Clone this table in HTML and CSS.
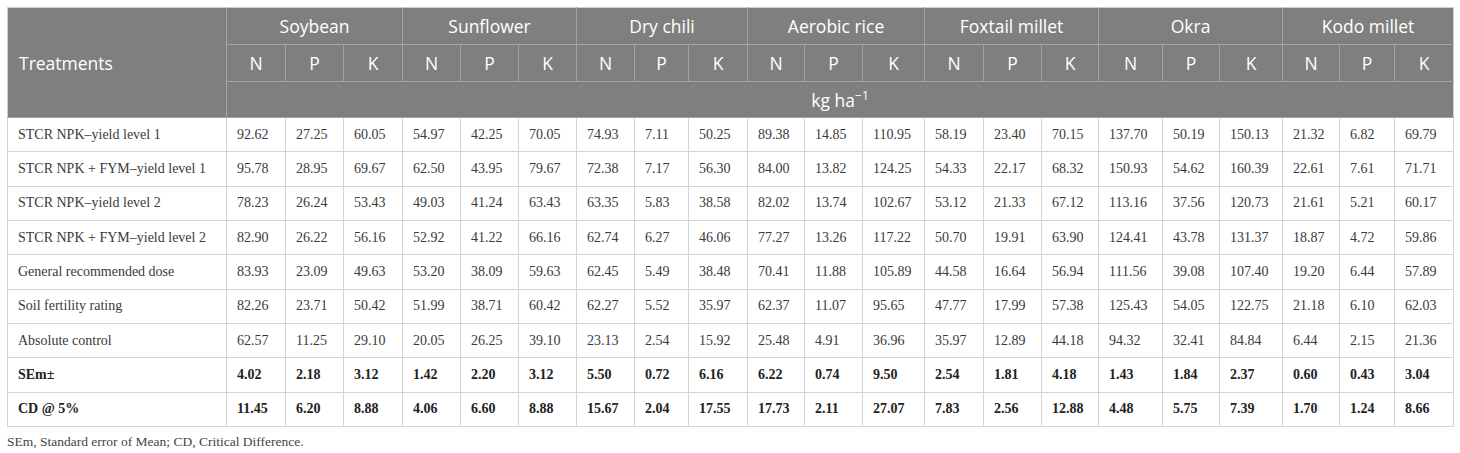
FILE: index.html
```html
<!DOCTYPE html>
<html lang="en">
<head>
    <meta charset="UTF-8">
    <meta name="viewport" content="width=device-width, initial-scale=1.0">
    <title>Nutrient uptake | Table</title>
    <link rel="stylesheet" href="styles.css">
</head>
<body>
    <section class="table-wrap">
        <table class="data-table">
            <colgroup>
                <col style="width: 219px">
                <col style="width: 59px"><col style="width: 58px"><col style="width: 59px">
                <col style="width: 58px"><col style="width: 58px"><col style="width: 58px">
                <col style="width: 58px"><col style="width: 54px"><col style="width: 59px">
                <col style="width: 57px"><col style="width: 58px"><col style="width: 62px">
                <col style="width: 59px"><col style="width: 58px"><col style="width: 57px">
                <col style="width: 64px"><col style="width: 57px"><col style="width: 63px">
                <col style="width: 57px"><col style="width: 55px"><col style="width: 59px">
            </colgroup>
            <thead>
                <tr class="row-crops">
                    <th rowspan="3" class="treat-head">Treatments</th>
                    <th colspan="3">Soybean</th>
                    <th colspan="3">Sunflower</th>
                    <th colspan="3">Dry chili</th>
                    <th colspan="3">Aerobic rice</th>
                    <th colspan="3">Foxtail millet</th>
                    <th colspan="3">Okra</th>
                    <th colspan="3">Kodo millet</th>
                </tr>
                <tr class="row-npk">
                    <th>N</th><th>P</th><th>K</th>
                    <th>N</th><th>P</th><th>K</th>
                    <th>N</th><th>P</th><th>K</th>
                    <th>N</th><th>P</th><th>K</th>
                    <th>N</th><th>P</th><th>K</th>
                    <th>N</th><th>P</th><th>K</th>
                    <th>N</th><th>P</th><th>K</th>
                </tr>
                <tr class="row-unit">
                    <th colspan="21">kg ha<sup>&minus;1</sup></th>
                </tr>
            </thead>
            <tbody>
                <tr>
                    <td>STCR NPK–yield level 1</td>
                    <td>92.62</td><td>27.25</td><td>60.05</td>
                    <td>54.97</td><td>42.25</td><td>70.05</td>
                    <td>74.93</td><td>7.11</td><td>50.25</td>
                    <td>89.38</td><td>14.85</td><td>110.95</td>
                    <td>58.19</td><td>23.40</td><td>70.15</td>
                    <td>137.70</td><td>50.19</td><td>150.13</td>
                    <td>21.32</td><td>6.82</td><td>69.79</td>
                </tr>
                <tr>
                    <td>STCR NPK + FYM–yield level 1</td>
                    <td>95.78</td><td>28.95</td><td>69.67</td>
                    <td>62.50</td><td>43.95</td><td>79.67</td>
                    <td>72.38</td><td>7.17</td><td>56.30</td>
                    <td>84.00</td><td>13.82</td><td>124.25</td>
                    <td>54.33</td><td>22.17</td><td>68.32</td>
                    <td>150.93</td><td>54.62</td><td>160.39</td>
                    <td>22.61</td><td>7.61</td><td>71.71</td>
                </tr>
                <tr>
                    <td>STCR NPK–yield level 2</td>
                    <td>78.23</td><td>26.24</td><td>53.43</td>
                    <td>49.03</td><td>41.24</td><td>63.43</td>
                    <td>63.35</td><td>5.83</td><td>38.58</td>
                    <td>82.02</td><td>13.74</td><td>102.67</td>
                    <td>53.12</td><td>21.33</td><td>67.12</td>
                    <td>113.16</td><td>37.56</td><td>120.73</td>
                    <td>21.61</td><td>5.21</td><td>60.17</td>
                </tr>
                <tr>
                    <td>STCR NPK + FYM–yield level 2</td>
                    <td>82.90</td><td>26.22</td><td>56.16</td>
                    <td>52.92</td><td>41.22</td><td>66.16</td>
                    <td>62.74</td><td>6.27</td><td>46.06</td>
                    <td>77.27</td><td>13.26</td><td>117.22</td>
                    <td>50.70</td><td>19.91</td><td>63.90</td>
                    <td>124.41</td><td>43.78</td><td>131.37</td>
                    <td>18.87</td><td>4.72</td><td>59.86</td>
                </tr>
                <tr>
                    <td>General recommended dose</td>
                    <td>83.93</td><td>23.09</td><td>49.63</td>
                    <td>53.20</td><td>38.09</td><td>59.63</td>
                    <td>62.45</td><td>5.49</td><td>38.48</td>
                    <td>70.41</td><td>11.88</td><td>105.89</td>
                    <td>44.58</td><td>16.64</td><td>56.94</td>
                    <td>111.56</td><td>39.08</td><td>107.40</td>
                    <td>19.20</td><td>6.44</td><td>57.89</td>
                </tr>
                <tr>
                    <td>Soil fertility rating</td>
                    <td>82.26</td><td>23.71</td><td>50.42</td>
                    <td>51.99</td><td>38.71</td><td>60.42</td>
                    <td>62.27</td><td>5.52</td><td>35.97</td>
                    <td>62.37</td><td>11.07</td><td>95.65</td>
                    <td>47.77</td><td>17.99</td><td>57.38</td>
                    <td>125.43</td><td>54.05</td><td>122.75</td>
                    <td>21.18</td><td>6.10</td><td>62.03</td>
                </tr>
                <tr>
                    <td>Absolute control</td>
                    <td>62.57</td><td>11.25</td><td>29.10</td>
                    <td>20.05</td><td>26.25</td><td>39.10</td>
                    <td>23.13</td><td>2.54</td><td>15.92</td>
                    <td>25.48</td><td>4.91</td><td>36.96</td>
                    <td>35.97</td><td>12.89</td><td>44.18</td>
                    <td>94.32</td><td>32.41</td><td>84.84</td>
                    <td>6.44</td><td>2.15</td><td>21.36</td>
                </tr>
                <tr class="row-bold">
                    <td>SEm±</td>
                    <td>4.02</td><td>2.18</td><td>3.12</td>
                    <td>1.42</td><td>2.20</td><td>3.12</td>
                    <td>5.50</td><td>0.72</td><td>6.16</td>
                    <td>6.22</td><td>0.74</td><td>9.50</td>
                    <td>2.54</td><td>1.81</td><td>4.18</td>
                    <td>1.43</td><td>1.84</td><td>2.37</td>
                    <td>0.60</td><td>0.43</td><td>3.04</td>
                </tr>
                <tr class="row-bold">
                    <td>CD @ 5%</td>
                    <td>11.45</td><td>6.20</td><td>8.88</td>
                    <td>4.06</td><td>6.60</td><td>8.88</td>
                    <td>15.67</td><td>2.04</td><td>17.55</td>
                    <td>17.73</td><td>2.11</td><td>27.07</td>
                    <td>7.83</td><td>2.56</td><td>12.88</td>
                    <td>4.48</td><td>5.75</td><td>7.39</td>
                    <td>1.70</td><td>1.24</td><td>8.66</td>
                </tr>
            </tbody>
        </table>
        <p class="table-note">SEm, Standard error of Mean; CD, Critical Difference.</p>
    </section>
</body>
</html>
```

FILE: styles.css
```css
body {
    margin: 0;
    padding: 7px;
    background-color: #fff;
    font-family: 'Liberation Serif', 'Times New Roman', serif;
    color: #333;
}

.data-table {
    width: 1446px;
    table-layout: fixed;
    border-collapse: collapse;
    border: 1px solid #d0d0d0;
}

.data-table thead th {
    background: #7f7f7f;
    color: #fff;
    font-family: 'Open Sans', 'Liberation Sans', sans-serif;
    font-weight: 400;
    font-size: 17.5px;
    text-align: center;
    border: 1px solid #a3a3a3;
    padding: 0;
}

.data-table thead th.treat-head {
    text-align: left;
    padding-left: 11px;
    border-left-color: #d0d0d0;
    border-top-color: #d0d0d0;
}

.row-crops th {
    height: 36px;
    border-top-color: #d0d0d0 !important;
}

.row-npk th {
    height: 36px;
}

.row-unit th {
    height: 35px;
}

.row-crops th:last-child,
.row-npk th:last-child,
.row-unit th:last-child {
    border-right-color: #d0d0d0;
}

.data-table sup {
    font-size: 12px;
    line-height: 0;
    vertical-align: 7px;
}

.data-table tbody td {
    height: 33.33px;
    padding: 0 10px;
    font-size: 14px;
    line-height: 16px;
    border: 1px solid #d5d5d5;
    text-align: left;
    white-space: nowrap;
    color: #3a3a3a;
}

.data-table tbody tr.row-bold td {
    font-weight: 700;
    color: #222;
}

.table-note {
    margin: 7px 0 0;
    font-size: 13.5px;
    color: #444;
}
```
